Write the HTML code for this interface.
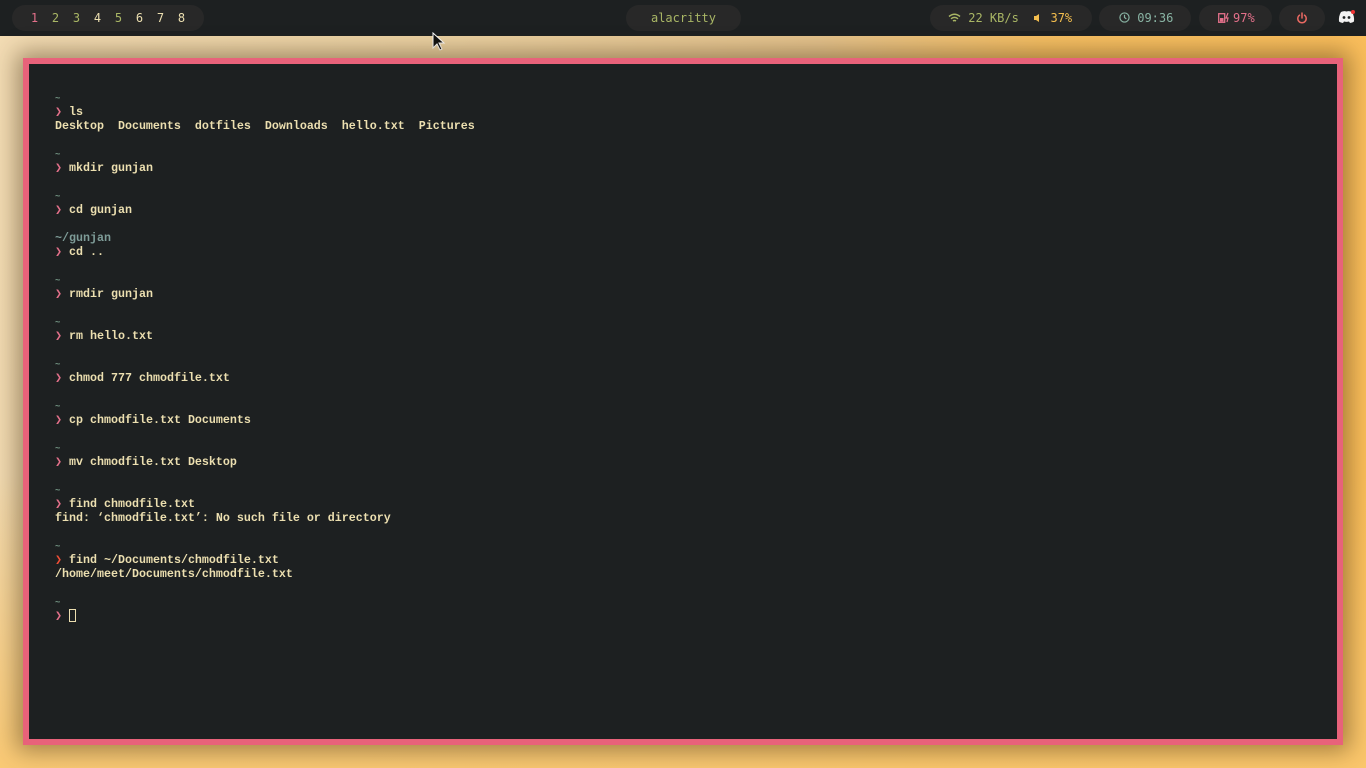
<!DOCTYPE html>
<html style="width:1366px;height:768px;overflow:hidden"><head><meta charset="utf-8"><style>
*{margin:0;padding:0;box-sizing:border-box}
body{width:1366px;height:768px;overflow:hidden;position:relative;font-family:"Liberation Mono","DejaVu Sans Mono",monospace;
background:linear-gradient(100deg,#f3dcb4 0%,#ecd2a3 30%,#e6c48e 55%,#f7c064 70%,#fbbd58 100%);}
.bg2{position:absolute;left:0;top:36px;width:1366px;height:732px;background:linear-gradient(180deg,rgba(0,0,0,0) 60%,rgba(251,200,110,.9) 100%)}
.bar{position:absolute;left:0;top:0;width:1366px;height:36px;background:#1d2021}
.pill{position:absolute;top:5px;height:26px;border-radius:13px;background:#282828;font-size:12px;line-height:26px;font-family:"DejaVu Sans Mono",monospace}
.ws span{display:inline-block;width:21px;text-align:center}
.win{position:absolute;left:23px;top:58px;width:1320px;height:687px;border:6px solid #e8627a;background:#1d2021;box-shadow:0 0 22px 6px rgba(60,40,10,.45)}
.term{position:absolute;left:55px;top:91px;font-size:11.67px;color:#ecdfb0;font-weight:bold}
.term div{height:14px;line-height:14px;white-space:pre}
.t{color:#6f8f7f;font-size:9px}
.p{color:#e3708a}
.r{color:#f04e36}
.d{color:#7e9c98}
.cur{display:inline-block;width:7px;height:13px;border:1px solid #ecdfb0;vertical-align:-3px}
</style></head><body>
<div class="bg2"></div>
<div class="bar"></div>
<div class="pill ws" style="left:12px;width:192px;padding-left:12px"><span style="color:#e3708a">1</span><span style="color:#a9b665">2</span><span style="color:#a9b665">3</span><span style="color:#ecdfb0">4</span><span style="color:#a9b665">5</span><span style="color:#ecdfb0">6</span><span style="color:#ecdfb0">7</span><span style="color:#ecdfb0">8</span></div>
<div class="pill" style="left:626px;width:115px;text-align:center;color:#a9b665">alacritty</div>
<div class="pill" style="left:930px;width:162px;color:#a9b665;padding-left:18px">
<svg width="13" height="10" viewBox="0 0 13 10" style="vertical-align:-1px"><path d="M1 3.5Q6.5-1 12 3.5M3 5.8Q6.5 3 10 5.8M5 8Q6.5 7 8 8" stroke="#a9b665" stroke-width="1.5" fill="none"/></svg> 22 KB/s &nbsp;<svg width="10" height="10" viewBox="0 0 10 10" style="vertical-align:-1px"><path d="M1 3h2l3-2v8l-3-2H1z" fill="#f4be4e"/></svg> <span style="color:#f4be4e">37%</span></div>
<div class="pill" style="left:1099px;width:92px;color:#89b4a4;padding-left:20px"><svg width="11" height="11" viewBox="0 0 12 12" style="vertical-align:-1px"><circle cx="6" cy="6" r="5" stroke="#89b4a4" stroke-width="1.3" fill="none"/><path d="M6 3v3l2 1.5" stroke="#89b4a4" stroke-width="1.3" fill="none"/></svg> 09:36</div>
<div class="pill" style="left:1199px;width:73px;color:#e3708a;padding-left:18px"><svg width="14" height="11" viewBox="0 0 12 11" style="vertical-align:-1px;margin-right:2px"><rect x="0.7" y="1.7" width="6" height="8.6" stroke="#e3708a" stroke-width="1.3" fill="none"/><rect x="2" y="6" width="3.5" height="3.5" fill="#e3708a"/><path d="M10 1L8 6h2l-1 4" stroke="#e3708a" stroke-width="1.2" fill="none"/></svg>97%</div>
<div class="pill" style="left:1279px;width:46px;text-align:center"><svg width="12" height="12" viewBox="0 0 12 12" style="vertical-align:-2px"><path d="M3.5 3.2A4.2 4.2 0 1 0 8.5 3.2M6 1v5" stroke="#ea6962" stroke-width="1.5" fill="none" stroke-linecap="round"/></svg></div>
<svg style="position:absolute;left:1338px;top:10px" width="17" height="14" viewBox="0 0 17 14"><path d="M3 2Q6 0.5 8.5 1.5Q11 0.5 14 2Q16.5 6 16 11.5Q14 13 12 13L11 11.5Q8.5 12.3 6 11.5L5 13Q3 13 1 11.5Q0.5 6 3 2Z" fill="#f2f2f2"/><circle cx="6" cy="7.5" r="1.4" fill="#1d2021"/><circle cx="11" cy="7.5" r="1.4" fill="#1d2021"/><circle cx="15" cy="2" r="2" fill="#e33"/></svg>
<svg style="position:absolute;left:432px;top:32px" width="14" height="20" viewBox="0 0 14 20"><path d="M1 1v15l4-4 3 6 2-1-3-6h5z" fill="#111" stroke="#fff" stroke-width="1"/></svg>
<div class="win"></div>
<div class="term"><div><span class="t">~</span></div><div><span class="p">❯</span> ls</div><div>Desktop  Documents  dotfiles  Downloads  hello.txt  Pictures</div><div></div><div><span class="t">~</span></div><div><span class="p">❯</span> mkdir gunjan</div><div></div><div><span class="t">~</span></div><div><span class="p">❯</span> cd gunjan</div><div></div><div><span class="d">~/gunjan</span></div><div><span class="p">❯</span> cd ..</div><div></div><div><span class="t">~</span></div><div><span class="p">❯</span> rmdir gunjan</div><div></div><div><span class="t">~</span></div><div><span class="p">❯</span> rm hello.txt</div><div></div><div><span class="t">~</span></div><div><span class="p">❯</span> chmod 777 chmodfile.txt</div><div></div><div><span class="t">~</span></div><div><span class="p">❯</span> cp chmodfile.txt Documents</div><div></div><div><span class="t">~</span></div><div><span class="p">❯</span> mv chmodfile.txt Desktop</div><div></div><div><span class="t">~</span></div><div><span class="p">❯</span> find chmodfile.txt</div><div>find: ‘chmodfile.txt’: No such file or directory</div><div></div><div><span class="t">~</span></div><div><span class="r">❯</span> find ~/Documents/chmodfile.txt</div><div>/home/meet/Documents/chmodfile.txt</div><div></div><div><span class="t">~</span></div><div><span class="p">❯</span> <span class="cur"></span></div></div>
</body></html>
